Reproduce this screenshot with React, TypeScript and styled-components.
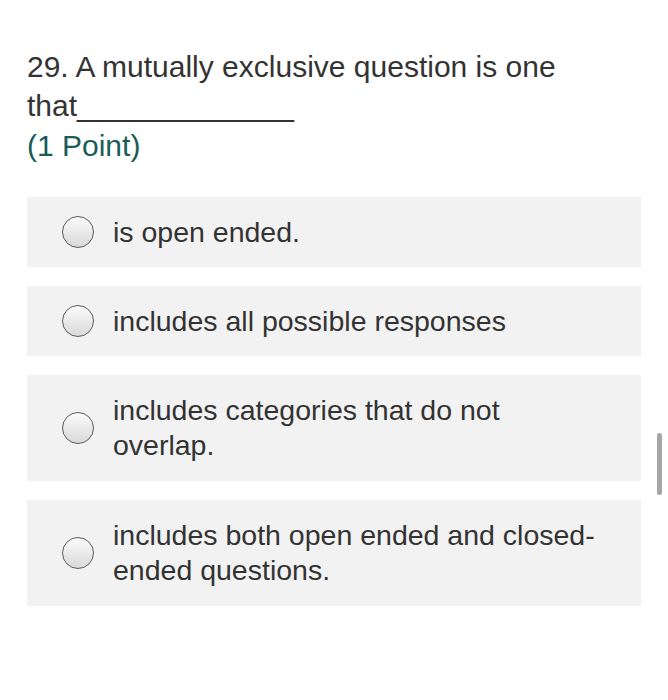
import React from 'react';
import styled, { createGlobalStyle } from 'styled-components';

const GlobalStyle = createGlobalStyle`
  html, body {
    margin: 0;
    padding: 0;
    background: #fff;
  }
  body {
    font-family: 'Liberation Sans', Arial, sans-serif;
  }
`;

const Page = styled.div`
  position: relative;
  width: 668px;
  height: 700px;
  padding: 47px 27px 0 27px;
  box-sizing: border-box;
`;

const Question = styled.div`
  font-size: 30px;
  line-height: 39px;
  color: #333;
`;

const Points = styled.div`
  font-size: 30px;
  line-height: 39px;
  color: #1b5c57;
  margin-top: 1px;
`;

const Options = styled.div`
  display: flex;
  flex-direction: column;
  gap: 19px;
  margin-top: 32px;
  width: 614px;
`;

const Option = styled.div<{ $tall?: boolean }>`
  display: flex;
  align-items: center;
  background: #f2f2f2;
  min-height: 70px;
  padding: ${(p) => (p.$tall ? '18px 40px 18px 35px' : '0 40px 0 35px')};
  box-sizing: border-box;
`;

const Radio = styled.span`
  flex: none;
  width: 32px;
  height: 32px;
  border-radius: 50%;
  border: 1.5px solid #5c5c5c;
  background: linear-gradient(#fbfbfb, #d9d9d9);
  margin-right: 19px;
  box-sizing: border-box;
`;

const Label = styled.span`
  font-size: 28.5px;
  line-height: 35px;
  color: #333;
`;

const Scrollbar = styled.div`
  position: absolute;
  left: 657px;
  top: 433px;
  width: 5px;
  height: 62px;
  border-radius: 3px;
  background: #a6a6a6;
`;

const options = [
  { text: 'is open ended.' },
  { text: 'includes all possible responses' },
  { text: 'includes categories that do not overlap.', tall: true },
  { text: 'includes both open ended and closed-ended questions.', tall: true },
];

export default function App() {
  return (
    <Page>
      <GlobalStyle />
      <Question>
        29. A mutually exclusive question is one
        <br />
        that_____________
      </Question>
      <Points>(1 Point)</Points>
      <Options>
        {options.map((o) => (
          <Option key={o.text} $tall={o.tall}>
            <Radio />
            <Label>{o.text}</Label>
          </Option>
        ))}
      </Options>
      <Scrollbar />
    </Page>
  );
}
